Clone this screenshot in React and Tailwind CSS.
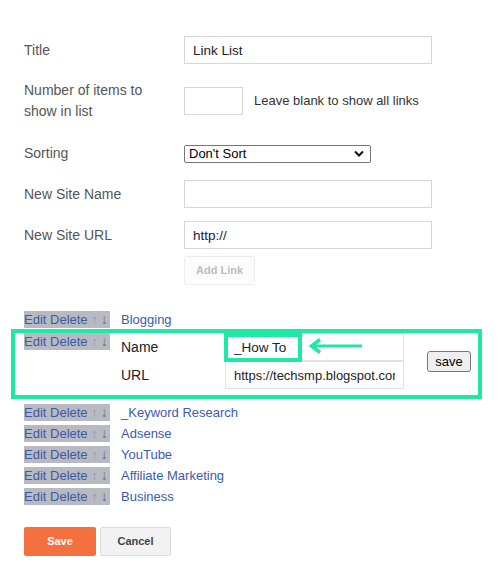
import React from "react";

const links = ["_Keyword Research", "Adsense", "YouTube", "Affiliate Marketing", "Business"];

// the selected "Edit Delete ↑ ↓" controls in front of every link
const Controls = () => (
  <div className="w-[97px] shrink-0">
    <span className="bg-[#b9b9c1] text-[#3d5aa8] leading-[16px] inline-block pr-[2px]">
      Edit Delete <span className="text-[#8d93a6] text-[12px]">↑</span>{" "}
      <span className="text-[#5f6c94] text-[14px]">↓</span>
    </span>
  </div>
);

const FormRow = ({ label, className, children }) => (
  <div className={"flex items-center " + className}>
    <div className="w-[160px] shrink-0 text-[14px] leading-[21px] text-[#555]">{label}</div>
    {children}
  </div>
);

const inputCls =
  "h-[28px] border border-[#d6d6d6] bg-white px-[8px] text-[13.5px] text-[#222] outline-none";

export default function App() {
  return (
    <div
      className="w-[504px] h-[578px] bg-white pl-[24px] pt-[36px]"
      style={{ fontFamily: '"Liberation Sans", Arial, sans-serif' }}
    >
      <FormRow label="Title" className="h-[28px]">
        <input className={inputCls + " w-[248px]"} defaultValue="Link List" />
      </FormRow>

      <FormRow label={<>Number of items to<br />show in list</>} className="h-[42px] mt-[16px]">
        <input className={inputCls + " w-[59px]"} />
        <span className="ml-[11px] text-[13px] text-[#333]">Leave blank to show all links</span>
      </FormRow>

      <FormRow label="Sorting" className="h-[21px] mt-[21px]">
        <div className="w-[187px] h-[18px] border border-[#767676] rounded-[2px] flex items-center justify-between pl-[4px] pr-[6px] text-[13px] text-black">
          <span>Don't Sort</span>
          <svg width="10" height="7" viewBox="0 0 10 7">
            <path d="M1 1.5 L5 5.5 L9 1.5" fill="none" stroke="#111" strokeWidth="2" />
          </svg>
        </div>
      </FormRow>

      <FormRow label="New Site Name" className="h-[28px] mt-[16px]">
        <input className={inputCls + " w-[248px]"} />
      </FormRow>

      <FormRow label="New Site URL" className="h-[28px] mt-[13px]">
        <input className={inputCls + " w-[248px]"} defaultValue="http://" />
      </FormRow>

      <div className="pl-[160px] mt-[7px]">
        <button className="w-[71px] h-[29px] border border-[#eeeeee] bg-[#fcfcfc] rounded-[2px] text-[11px] font-bold text-[#bdbdbd]">
          Add Link
        </button>
      </div>

      <div className="mt-[24px] text-[13px]">
        <div className="flex items-center h-[21px]">
          <Controls />
          <span className="text-[#3b5bab]">Blogging</span>
        </div>

        {/* link being edited */}
        <div className="relative flex items-start h-[72px] pt-[1px]">
          <div className="pt-[1px]">
            <Controls />
          </div>
          <div className="flex items-center mt-[2px]">
            <div className="flex flex-col">
              <div className="flex items-center h-[28px]">
                <span className="w-[104px] text-[14px] text-[#222]">Name</span>
                <div className="relative">
                  <input className={inputCls + " w-[179px] border-[#e3e3e3]"} defaultValue="_How To" />
                  <div className="absolute left-[-1px] top-0 w-[78px] h-[29px] border-[4px] border-[#1fe8a6]" />
                  <svg className="absolute left-[83px] top-[5px]" width="56" height="16" viewBox="0 0 56 16">
                    <path d="M4 8 H54" stroke="#1fe8a6" strokeWidth="3" />
                    <path d="M12 1.5 L3.5 8 L12 14.5" fill="none" stroke="#1fe8a6" strokeWidth="3.5" />
                  </svg>
                </div>
              </div>
              <div className="flex items-center h-[28px]">
                <span className="w-[104px] text-[14px] text-[#222]">URL</span>
                <input
                  className={inputCls + " w-[179px] border-[#e3e3e3] text-[13px]"}
                  defaultValue="https://techsmp.blogspot.com/search/label/How%20To"
                />
              </div>
            </div>
            <button className="ml-[23px] w-[44px] h-[21px] border border-[#767676] rounded-[3px] bg-[#efefef] text-[13px] text-black leading-none">
              save
            </button>
          </div>
          <div className="absolute left-[-13px] top-[-1px] w-[471px] h-[70px] border-[4px] border-[#1fe8a6] pointer-events-none" />
        </div>

        {links.map((l) => (
          <div key={l} className="flex items-center h-[21px]">
            <Controls />
            <span className="text-[#3b5bab]">{l}</span>
          </div>
        ))}
      </div>

      <div className="flex gap-[4px] mt-[20px]">
        <button className="w-[72px] h-[29px] rounded-[2px] bg-[#f4703e] text-white text-[11px] font-bold">
          Save
        </button>
        <button className="w-[71px] h-[29px] rounded-[2px] border border-[#dcdcdc] bg-[#f2f2f2] text-[#444] text-[11px] font-bold">
          Cancel
        </button>
      </div>
    </div>
  );
}
